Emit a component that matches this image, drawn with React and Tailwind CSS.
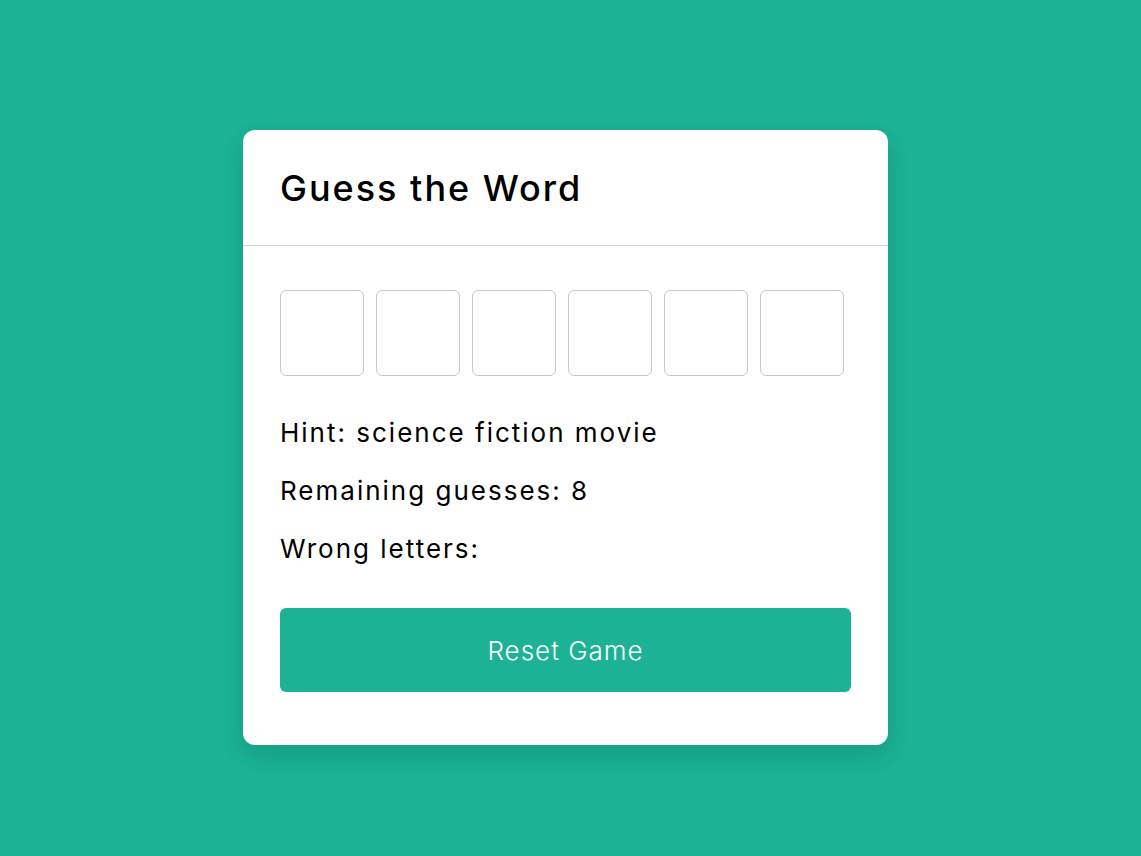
const letters = [0, 1, 2, 3, 4, 5];

const App = () => {
  return (
    <div
      className="min-h-screen bg-[#1bb295] pt-[130px] pl-[243px]"
      style={{ fontFamily: "Inter, 'Noto Sans', sans-serif" }}
    >
      <div className="w-[645px] rounded-[12px] bg-white shadow-[0_10px_25px_rgba(0,0,0,0.12)]">
        {/* header */}
        <div className="h-[116px] border-b border-[#d4d4d4] px-[37px] flex items-center">
          <h1 className="text-[36px] tracking-[2px] font-medium text-black">Guess the Word</h1>
        </div>

        {/* body */}
        <div className="px-[37px] pt-[44px] pb-[53px]">
          <div className="flex gap-[12px]">
            {letters.map((i) => (
              <input
                key={i}
                type="text"
                maxLength={1}
                className="w-[84px] h-[86px] rounded-[6px] border border-[#c8c8c8] text-center text-[32px] outline-none"
              />
            ))}
          </div>

          <div className="mt-[28px] flex flex-col text-[26px] tracking-[2px] text-black">
            <p className="leading-[58px]">Hint: science fiction movie</p>
            <p className="leading-[58px]">Remaining guesses: 8</p>
            <p className="leading-[58px]">Wrong letters:</p>
          </div>

          <button className="mt-[30px] w-full h-[84px] rounded-[6px] bg-[#1bb295] text-white text-[26px] tracking-[1px] font-light">
            Reset Game
          </button>
        </div>
      </div>
    </div>
  );
};

export default App;
